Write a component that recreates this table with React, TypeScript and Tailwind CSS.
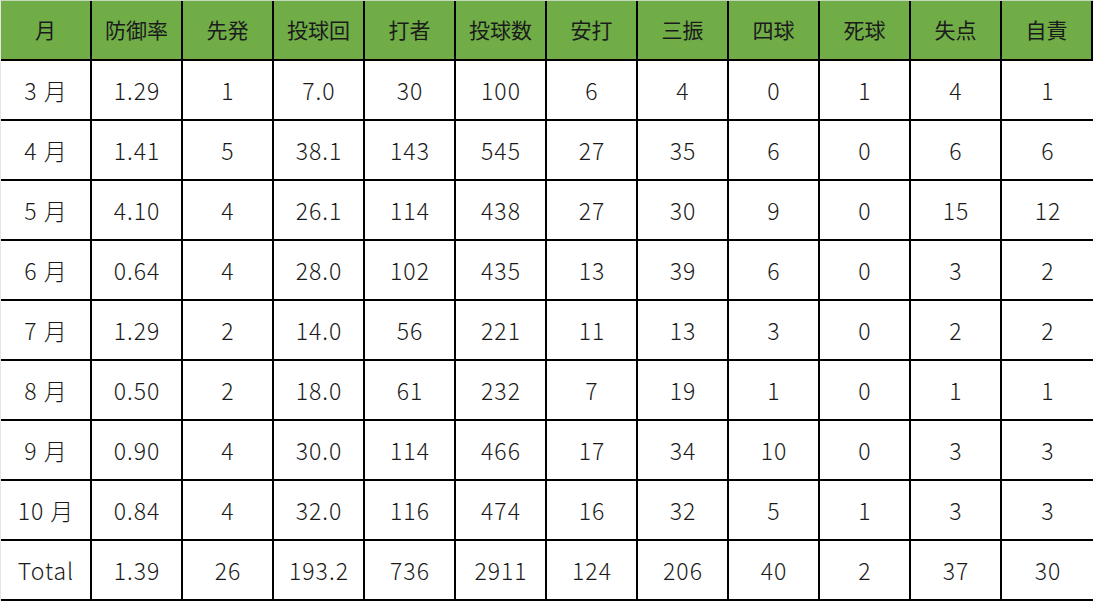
import React from "react";

const headers = ["月", "防御率", "先発", "投球回", "打者", "投球数", "安打", "三振", "四球", "死球", "失点", "自責"];
const rows: string[][] = [
  ["3 月", "1.29", "1", "7.0", "30", "100", "6", "4", "0", "1", "4", "1"],
  ["4 月", "1.41", "5", "38.1", "143", "545", "27", "35", "6", "0", "6", "6"],
  ["5 月", "4.10", "4", "26.1", "114", "438", "27", "30", "9", "0", "15", "12"],
  ["6 月", "0.64", "4", "28.0", "102", "435", "13", "39", "6", "0", "3", "2"],
  ["7 月", "1.29", "2", "14.0", "56", "221", "11", "13", "3", "0", "2", "2"],
  ["8 月", "0.50", "2", "18.0", "61", "232", "7", "19", "1", "0", "1", "1"],
  ["9 月", "0.90", "4", "30.0", "114", "466", "17", "34", "10", "0", "3", "3"],
  ["10 月", "0.84", "4", "32.0", "116", "474", "16", "32", "5", "1", "3", "3"],
  ["Total", "1.39", "26", "193.2", "736", "2911", "124", "206", "40", "2", "37", "30"],
];

export default function App() {
  return (
    <div
      className="w-[1093px] h-[601px] bg-white overflow-hidden"
      style={{ fontFamily: '"Noto Sans CJK JP", "Noto Sans", sans-serif' }}
    >
      <div className="grid grid-cols-[repeat(12,91px)] border-t border-l border-t-[#c8d8bc] border-l-[#e4e4e4]">
        {headers.map((h) => (
          <div
            key={h}
            className="h-[60px] bg-[#70ad47] flex items-center justify-center text-[21px] text-[#1b1b1b] border-b-2 border-r-2 border-black"
          >
            {h}
          </div>
        ))}
        {rows.map((r, ri) =>
          r.map((c, ci) => (
            <div
              key={`${ri}-${ci}`}
              className={`h-[60px] flex items-center justify-center pl-[1px] text-[23px] font-light tracking-[1px] text-[#1a1a1a] border-b-2 border-black ${ci < 11 ? "border-r-2" : ""}`}
            >
              {c}
            </div>
          ))
        )}
      </div>
    </div>
  );
}
